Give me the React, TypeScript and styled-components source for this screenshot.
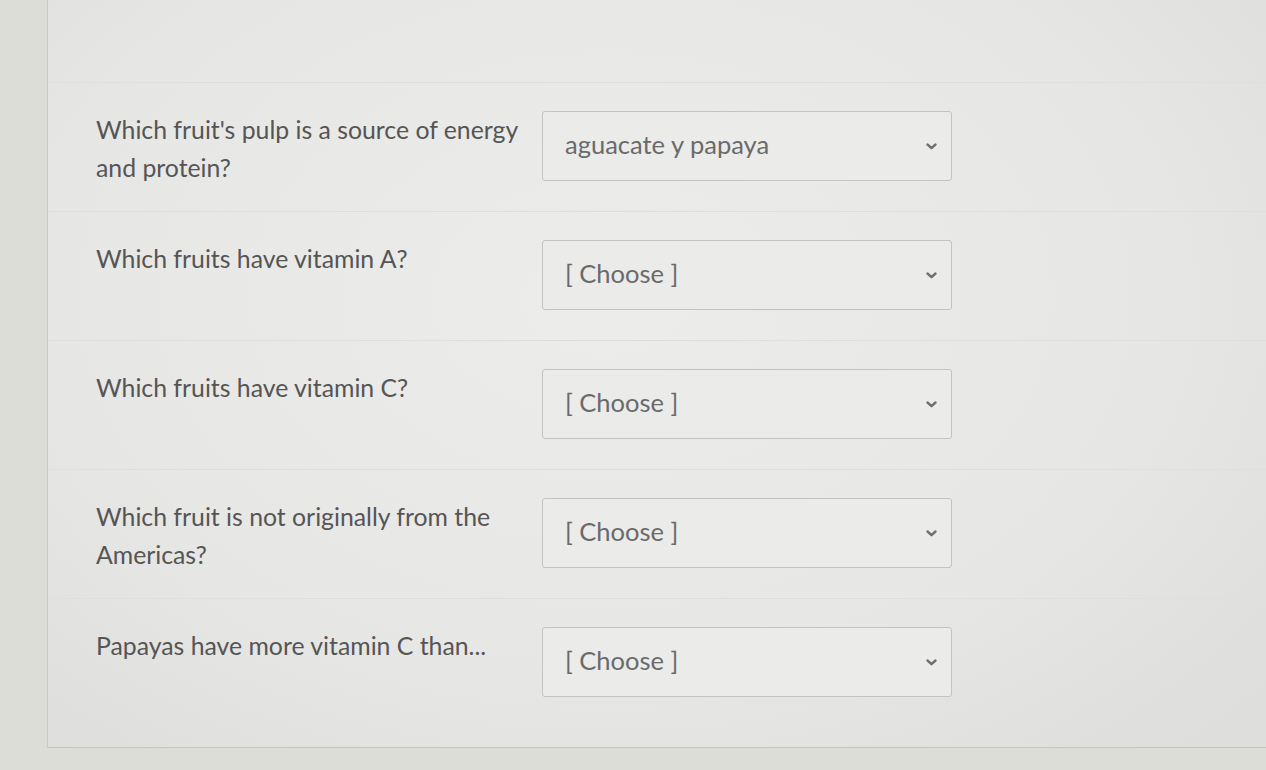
import React from "react";
import styled, { createGlobalStyle } from "styled-components";

const Global = createGlobalStyle`
  html, body { margin: 0; padding: 0; }
  body {
    width: 1266px;
    height: 770px;
    overflow: hidden;
    background: #dcddd7;
    font-family: Lato, "Open Sans", "Liberation Sans", sans-serif;
  }
`;

const Page = styled.div`
  width: 1266px;
  height: 770px;
  padding-left: 47px;
  box-sizing: border-box;
  overflow: hidden;
`;

const Card = styled.section`
  height: 748px;
  box-sizing: border-box;
  border-left: 1px solid #c9cac5;
  border-bottom: 1px solid #c4c5c0;
  background: radial-gradient(ellipse 70% 80% at 45% 40%, #ececea 0%, #e7e7e5 60%, #dededc 100%);
  padding-top: 82px;
  margin-right: -20px;
`;

const Row = styled.div`
  display: flex;
  align-items: flex-start;
  height: 129px;
  box-sizing: border-box;
  padding: 28px 0 0 48px;
  border-top: 1px solid #dfdfdd;
`;

const Question = styled.div`
  width: 440px;
  flex: none;
  margin-right: 6px;
  font-size: 24.8px;
  line-height: 38px;
  color: #555;
`;

const Select = styled.div`
  width: 410px;
  height: 70px;
  flex: none;
  box-sizing: border-box;
  display: flex;
  align-items: center;
  justify-content: space-between;
  padding: 0 13px 0 22px;
  border: 1.5px solid #c3c3c1;
  border-radius: 3px;
  background: #ebebea;
  color: #6a6a6a;
  font-size: 25.5px;
`;

const Value = styled.span`
  margin-top: -4px;
`;

const Chevron = () => (
  <svg width="13" height="9" viewBox="0 0 13 9" aria-hidden="true">
    <polyline points="2.5,2.5 6.5,6.2 10.5,2.5" fill="none" stroke="#707070" strokeWidth="2.4" strokeLinecap="round" strokeLinejoin="round" />
  </svg>
);

const items = [
  { q: "Which fruit's pulp is a source of energy and protein?", a: "aguacate y papaya" },
  { q: "Which fruits have vitamin A?", a: "[ Choose ]" },
  { q: "Which fruits have vitamin C?", a: "[ Choose ]" },
  { q: "Which fruit is not originally from the Americas?", a: "[ Choose ]" },
  { q: "Papayas have more vitamin C than...", a: "[ Choose ]" },
];

export default function App() {
  return (
    <>
      <Global />
      <Page>
        <Card>
          {items.map((it, i) => (
            <Row key={i}>
              <Question>{it.q}</Question>
              <Select>
                <Value>{it.a}</Value>
                <Chevron />
              </Select>
            </Row>
          ))}
        </Card>
      </Page>
    </>
  );
}
